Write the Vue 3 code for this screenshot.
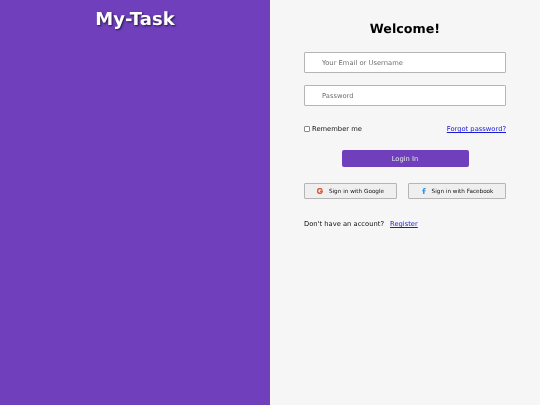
<script setup>
</script>

<template>
  <div class="page">
    <aside class="brand">
      <h1 class="logo">My-Task</h1>
    </aside>
    <main class="panel">
      <h2 class="welcome">Welcome!</h2>
      <input class="field" type="text" placeholder="Your Email or Username" />
      <input class="field second" type="password" placeholder="Password" />
      <div class="options">
        <label class="remember"><input class="check" type="checkbox" />Remember me</label>
        <a class="link" href="#">Forgot password?</a>
      </div>
      <button class="login" type="button">Login In</button>
      <div class="socials">
        <button class="social google" type="button">
          <svg class="icon" viewBox="0 0 24 24" width="6" height="6"><path fill="none" stroke="#e0562c" stroke-width="6" d="M20 7.500A9.500 9.500 0 1 0 21 13h-8.500"/></svg>
          Sign in with Google
        </button>
        <button class="social facebook" type="button">
          <svg class="icon" viewBox="0 0 24 24" width="6" height="6"><path fill="#2f9be0" d="M8 24V13H4V9h4V6c0-4 2.400-6 6-6h5v4h-3c-1.500 0-2 .8-2 2v3h5l-1 4h-4v11z"/></svg>
          Sign in with Facebook
        </button>
      </div>
      <p class="signup">Don't have an account?<a class="link register" href="#">Register</a></p>
    </main>
  </div>
</template>

<style>
html, body { margin: 0; padding: 0; }
</style>

<style scoped>
.page {
  display: flex;
  width: 540px;
  height: 405px;
  overflow: hidden;
  font-family: "DejaVu Sans", sans-serif;
  text-rendering: geometricPrecision;
}
.brand {
  width: 270px;
  background: #6f3fbc;
  display: flex;
  justify-content: center;
}
.logo {
  margin: 9px 0 0;
  font-size: 18px;
  line-height: 22px;
  font-weight: 700;
  color: #fff;
  text-shadow: 1px 1px 2px rgba(0, 0, 0, 0.7);
  filter: blur(0.25px);
}
.panel {
  width: 270px;
  box-sizing: border-box;
  padding: 20px 34px 0;
  background: #f6f6f6;
  display: flex;
  flex-direction: column;
}
.welcome {
  margin: 0 0 14px;
  font-size: 12.700px;
  line-height: 18px;
  font-weight: 700;
  color: #000;
  text-align: center;
  filter: blur(0.25px);
}
.field {
  box-sizing: border-box;
  width: 202px;
  height: 21px;
  padding: 0 17px;
  border: 1px solid #b5b5b5;
  border-radius: 1px;
  background: #fff;
  font: 6.750px "DejaVu Sans", sans-serif;
  outline: none;
  filter: blur(0.4px);
}
.field::placeholder { color: #707070; opacity: 1; }
.second { margin-top: 12px; }
.options {
  margin-top: 17px;
  display: flex;
  justify-content: space-between;
  align-items: center;
  height: 12px;
  font-size: 6.750px;
  color: #111;
  filter: blur(0.4px);
}
.remember { display: flex; align-items: center; }
.check {
  appearance: none;
  box-sizing: border-box;
  width: 6px;
  height: 6px;
  margin: 0 2px 0 0;
  border: 1px solid #8a8a8a;
  border-radius: 1px;
  background: #fff;
}
.link { color: #1a1ad6; text-decoration: underline; font-size: 6.750px; }
.login {
  align-self: center;
  margin-top: 15px;
  width: 127px;
  height: 17px;
  padding: 0;
  border: none;
  border-radius: 2px;
  background: #6f3fbc;
  color: #e8e8e8;
  font: 6.750px "DejaVu Sans", sans-serif;
  filter: blur(0.4px);
}
.socials {
  margin-top: 16px;
  display: flex;
  justify-content: space-between;
  filter: blur(0.4px);
}
.social {
  box-sizing: border-box;
  height: 16px;
  padding: 0;
  border: 1px solid #b5b5b5;
  border-radius: 1px;
  background: #efefef;
  color: #111;
  font: 5.700px "DejaVu Sans", sans-serif;
  display: flex;
  align-items: center;
  justify-content: center;
  gap: 6px;
}
.google { width: 93px; }
.facebook { width: 98px; gap: 5px; }
.signup {
  margin: 20px 0 0;
  font-size: 6.750px;
  line-height: 11px;
  color: #111;
  filter: blur(0.4px);
}
.register { margin-left: 6px; }
</style>
